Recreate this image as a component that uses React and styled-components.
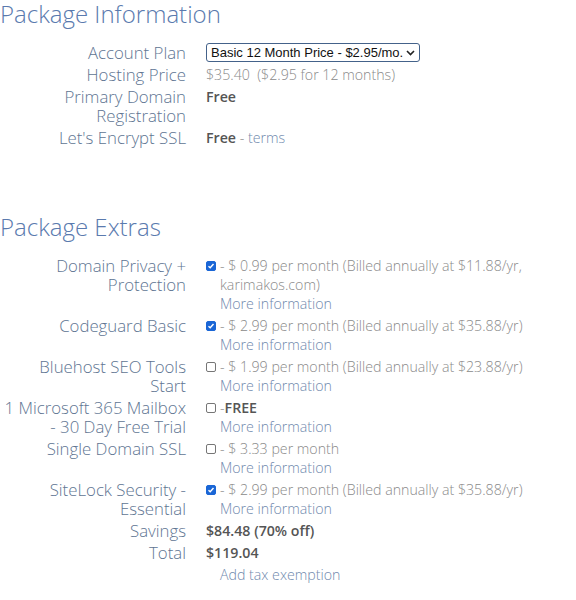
import React from "react";
import styled, { createGlobalStyle } from "styled-components";

const GlobalStyle = createGlobalStyle`
  html, body {
    margin: 0;
    padding: 0;
    background: #ffffff;
  }
  body {
    font-family: "Open Sans", "Liberation Sans", sans-serif;
  }
`;

const Page = styled.div`
  width: 576px;
`;

const Heading = styled.h2`
  margin: 0;
  font-size: 24px;
  line-height: 28px;
  font-weight: 300;
  color: #5a7aae;
  margin-top: ${(p) => p.$top || 0}px;
`;

const Table = styled.div`
  display: grid;
  grid-template-columns: 186px 1fr;
  column-gap: 20px;
  row-gap: 3px;
  margin-top: ${(p) => p.$top || 0}px;
`;

const Label = styled.div`
  text-align: right;
  font-size: 16.8px;
  line-height: 19px;
  font-weight: 300;
  color: #607592;
  white-space: nowrap;
`;

const Value = styled.div`
  font-size: 14.2px;
  line-height: 19px;
  font-weight: 300;
  color: #8a8a8a;
  white-space: nowrap;
`;

const SelectCell = styled.div`
  display: flex;
  align-items: center;
  height: 19px;
`;

const Strong = styled.span`
  font-weight: 600;
  color: #555555;
`;

const Link = styled.span`
  color: #7089ad;
  font-weight: 300;
  display: ${(p) => (p.$block ? "block" : "inline")};
  padding-left: ${(p) => p.$indent || 0}px;
  margin-top: ${(p) => p.$gap || 0}px;
`;

const Select = styled.div`
  display: flex;
  align-items: center;
  justify-content: space-between;
  box-sizing: border-box;
  width: 214px;
  height: 19px;
  padding: 0 4px;
  border: 1px solid #44628a;
  border-radius: 3px;
  font-family: "Liberation Sans", Arial, sans-serif;
  font-size: 13px;
  color: #111111;
  white-space: nowrap;
  overflow: hidden;
`;

const ExtraValue = styled.div`
  display: flex;
  align-items: flex-start;
  font-size: 14.2px;
  line-height: 19px;
  font-weight: 300;
  color: #8a8a8a;
  white-space: nowrap;
`;

const Box = styled.span`
  flex: none;
  box-sizing: border-box;
  width: 10px;
  height: 10px;
  margin: 5px 4px 0 0;
  border-radius: 2px;
  display: flex;
  align-items: center;
  justify-content: center;
  background: ${(p) => (p.$checked ? "#1a66d6" : "#ffffff")};
  border: 1px solid ${(p) => (p.$checked ? "#1a66d6" : "#767676")};
`;

const Check = () => (
  <svg width="8" height="8" viewBox="0 0 8 8">
    <path d="M1.5 4.2 L3.2 5.8 L6.5 2" fill="none" stroke="#fff" strokeWidth="1.4" />
  </svg>
);

const Checkbox = ({ checked }) => <Box $checked={checked}>{checked && <Check />}</Box>;

const Extra = ({ label, checked, children }) => (
  <>
    <Label>{label}</Label>
    <ExtraValue>
      <Checkbox checked={checked} />
      <div>
        {children}
        <Link $block>More information</Link>
      </div>
    </ExtraValue>
  </>
);

export default function App() {
  return (
    <Page>
      <GlobalStyle />
      <Heading>Package Information</Heading>
      <Table $top={15}>
        <Label>Account Plan</Label>
        <SelectCell>
          <Select>
            <span>Basic 12 Month Price - $2.95/mo.</span>
            <svg width="9" height="6" viewBox="0 0 9 6">
              <path d="M1 1 L4.5 4.5 L8 1" fill="none" stroke="#222" strokeWidth="1.6" />
            </svg>
          </Select>
        </SelectCell>
        <Label>Hosting Price</Label>
        <Value>$35.40&nbsp; ($2.95 for 12 months)</Value>
        <Label>
          Primary Domain
          <br />
          Registration
        </Label>
        <Value>
          <Strong>Free</Strong>
        </Value>
        <Label>Let's Encrypt SSL</Label>
        <Value>
          <Strong>Free</Strong> - <Link>terms</Link>
        </Value>
      </Table>

      <Heading $top={66}>Package Extras</Heading>
      <Table $top={15}>
        <Extra label={<>Domain Privacy +<br />Protection</>} checked>
          - $ 0.99 per month (Billed annually at $11.88/yr,
          <br />
          karimakos.com)
        </Extra>
        <Extra label="Codeguard Basic" checked>
          - $ 2.99 per month (Billed annually at $35.88/yr)
        </Extra>
        <Extra label={<>Bluehost SEO Tools<br />Start</>}>
          - $ 1.99 per month (Billed annually at $23.88/yr)
        </Extra>
        <Extra label={<>1 Microsoft 365 Mailbox<br />- 30 Day Free Trial</>}>
          -<Strong>FREE</Strong>
        </Extra>
        <Extra label="Single Domain SSL">- $ 3.33 per month</Extra>
        <Extra label={<>SiteLock Security -<br />Essential</>} checked>
          - $ 2.99 per month (Billed annually at $35.88/yr)
        </Extra>
        <Label>Savings</Label>
        <Value>
          <Strong>$84.48 (70% off)</Strong>
        </Value>
        <Label>Total</Label>
        <Value>
          <Strong>$119.04</Strong>
          <Link $block $indent={14} $gap={3}>Add tax exemption</Link>
        </Value>
      </Table>
    </Page>
  );
}
